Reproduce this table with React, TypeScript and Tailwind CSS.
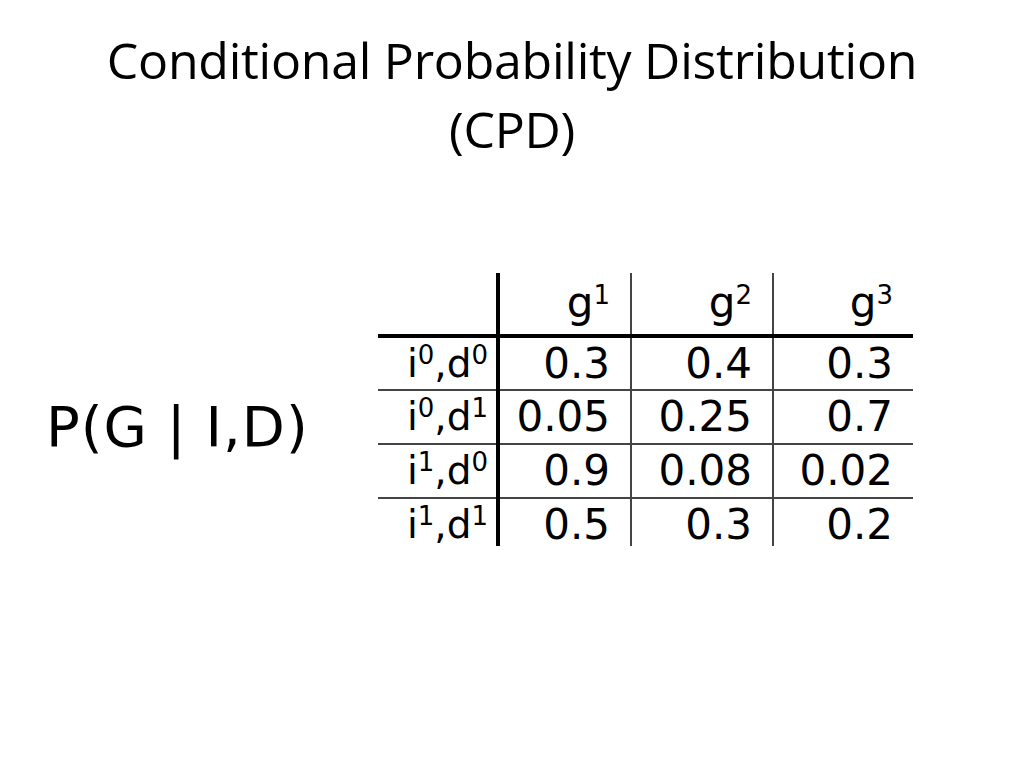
const rows = [
  { i: "0", d: "0", v: ["0.3", "0.4", "0.3"] },
  { i: "0", d: "1", v: ["0.05", "0.25", "0.7"] },
  { i: "1", d: "0", v: ["0.9", "0.08", "0.02"] },
  { i: "1", d: "1", v: ["0.5", "0.3", "0.2"] },
];

// preflight already lifts <sup> by half its own size
function Sup({ children }: { children: React.ReactNode }) {
  return <sup className="text-[26px]">{children}</sup>;
}

export default function App() {
  return (
    <div className="h-[768px] w-[1024px] bg-white text-black">
      {/* slide title */}
      <h1 className="pt-[26px] text-center font-['Open_Sans',sans-serif] text-[50px] leading-[69px] tracking-[-0.25px]">
        Conditional Probability Distribution
        <br />
        (CPD)
      </h1>

      <div className="mt-[109px] flex items-start">
        <div className="ml-[46px] mt-[126px] w-[332px] font-['DejaVu_Sans',sans-serif] text-[56px] leading-none tracking-[1px]">
          P(G | I,D)
        </div>

        <table className="border-collapse font-['DejaVu_Sans',sans-serif] text-[42px] leading-none">
          <thead>
            <tr className="h-[63px]">
              <th className="w-[120px] border-r-4 border-b-4 border-black"></th>
              {["1", "2", "3"].map((n, k) => (
                <th
                  key={n}
                  className={
                    "border-b-4 border-black pr-[20px] pb-[10px] text-right align-bottom font-normal " +
                    (k === 0 ? "w-[133px] border-r-2 border-r-[#444]" : k === 1 ? "w-[142px] border-r-2 border-r-[#444]" : "w-[140px]")
                  }
                >
                  g<Sup>{n}</Sup>
                </th>
              ))}
            </tr>
          </thead>
          <tbody>
            {rows.map((r, idx) => (
              <tr key={idx} className={idx < 3 ? "h-[54px] border-b-2 border-[#444]" : "h-[44px]"}>
                <td className="border-r-4 border-black pt-[6px] pr-[8px] text-right align-top text-[39px]">
                  i<Sup>{r.i}</Sup>,d<Sup>{r.d}</Sup>
                </td>
                {r.v.map((x, k) => (
                  <td
                    key={k}
                    className={"pt-[5px] pr-[20px] text-right align-top " + (k < 2 ? "border-r-2 border-r-[#444]" : "")}
                  >
                    {x}
                  </td>
                ))}
              </tr>
            ))}
          </tbody>
        </table>
      </div>
    </div>
  );
}
